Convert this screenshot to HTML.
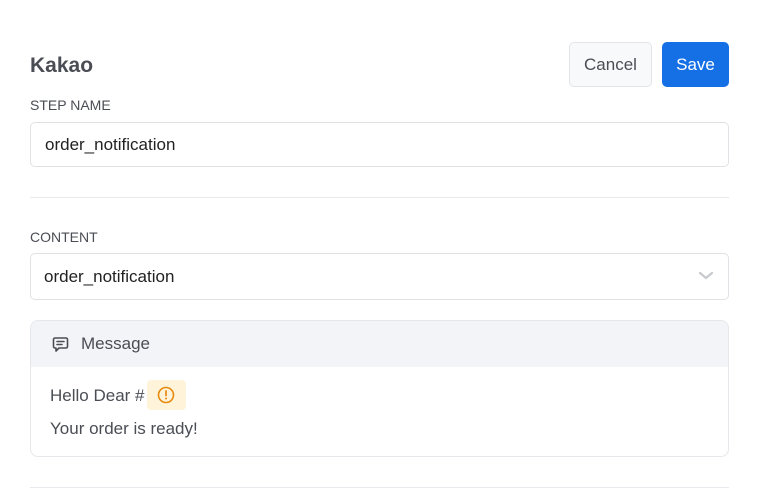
<!DOCTYPE html>
<html><head><meta charset="utf-8"><style>
*{box-sizing:border-box;margin:0;padding:0}
body{width:761px;height:498px;background:#fff;font-family:"Liberation Sans",sans-serif;position:relative;overflow:hidden;color:#4b4d55}
.a{position:absolute}
.title{left:30px;top:54px;font-size:21px;font-weight:bold;color:#4b4d55}
.btn{top:42px;height:45px;border-radius:5px;font-size:17px;display:flex;align-items:center;justify-content:center}
.cancel{left:569px;width:83px;background:#f8f9fb;border:1px solid #e2e4e8;color:#4b4d55}
.save{left:662px;width:67px;background:#1570e6;color:#fff}
.lbl{left:30px;font-size:14px;color:#4b4d55}
.inp{left:30px;width:699px;border:1px solid #e0e2e6;border-radius:5px;font-size:17px;color:#222;display:flex;align-items:center}
.hr{left:30px;width:699px;height:1px;background:#e8e9ec}
.card{left:30px;top:320px;width:699px;height:137px;border:1px solid #e6e7eb;border-radius:8px;overflow:hidden}
.head{height:46px;background:#f3f4f8;display:flex;align-items:center;padding-left:21px;font-size:17px;color:#4b4d55}
.body{font-size:17px;color:#4b4d55}
</style></head><body>
<div class="a title">Kakao</div>
<div class="a btn cancel">Cancel</div>
<div class="a btn save">Save</div>
<div class="a lbl" style="top:97px">STEP NAME</div>
<div class="a inp" style="top:122px;height:45px;padding-left:14px">order_notification</div>
<div class="a hr" style="top:197px"></div>
<div class="a lbl" style="top:229px">CONTENT</div>
<div class="a inp" style="top:253px;height:47px;padding-left:13px">order_notification
<svg class="a" style="left:667px;top:17px" width="16" height="10" viewBox="0 0 16 10"><path d="M2 2l6 5 6-5" fill="none" stroke="#c8c9cd" stroke-width="2.2" stroke-linecap="round"/></svg></div>
<div class="a card">
 <div class="head"><svg width="17" height="17" viewBox="0 0 17 17" style="margin-right:12px"><path d="M3 2h11a1.5 1.5 0 0 1 1.5 1.5v7A1.5 1.5 0 0 1 14 12H7l-3 3v-3H3A1.5 1.5 0 0 1 1.5 10.5v-7A1.5 1.5 0 0 1 3 2z" fill="none" stroke="#4b4d55" stroke-width="1.6" stroke-linejoin="round"/><path d="M5 5.5h7M5 8.5h5" stroke="#4b4d55" stroke-width="1.6" stroke-linecap="round"/></svg>Message</div>
</div>
<div class="a body" style="left:50px;top:386px">Hello Dear #</div>
<div class="a" style="left:147px;top:380px;width:39px;height:30px;background:#fff3d9;border-radius:4px"></div>
<svg class="a" style="left:157px;top:386px" width="18" height="18" viewBox="0 0 18 18"><circle cx="9" cy="9" r="7.5" fill="none" stroke="#e68a0f" stroke-width="1.6"/><path d="M9 5v4.5" stroke="#e68a0f" stroke-width="1.7" stroke-linecap="round"/><circle cx="9" cy="12.5" r="1" fill="#e68a0f"/></svg>
<div class="a body" style="left:50px;top:419px">Your order is ready!</div>
<div class="a hr" style="top:487px"></div>
</body></html>
